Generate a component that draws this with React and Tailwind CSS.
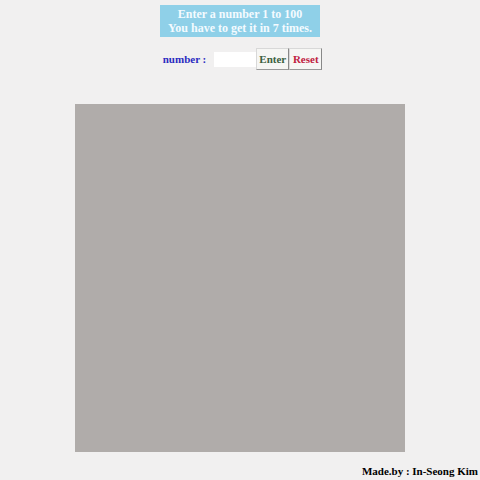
export default function App() {
  return (
    <div className="w-full min-h-[480px] bg-[#f1f0f0] flex flex-col items-center font-['Liberation_Serif',serif]">
      {/* Title */}
      <div className="mt-[5px] w-[160px] h-[32px] bg-[#8fd0e8] text-[#f4fbff] text-center font-bold text-[12px] leading-[14px] pt-[2px]">
        <p>Enter a number 1 to 100</p>
        <p>You have to get it in 7 times.</p>
      </div>

      {/* Input row */}
      <div className="mt-[11px] flex items-center h-[22px] pl-[5px]">
        <span className="text-[11px] font-bold text-[#2b2bc0] mr-[8px]">number :</span>
        <input type="text" className="w-[42px] h-[15px] bg-white outline-none border-0" />
        <button className="w-[33px] h-[22px] bg-[#f6f6f4] border border-[#d8d8d8] border-r-[#888] border-b-[#999] text-[11px] font-bold text-[#3a6040]">
          Enter
        </button>
        <button className="w-[33px] h-[22px] bg-[#f6f6f4] border border-[#d8d8d8] border-r-[#888] border-b-[#999] text-[11px] font-bold text-[#c02040]">
          Reset
        </button>
      </div>

      {/* Board */}
      <div className="mt-[34px] w-[330px] h-[348px] bg-[#b0acaa]" />

      {/* Footer */}
      <p className="self-end mt-[13px] mr-[2px] text-[11px] leading-[13px] font-bold text-black">
        Made.by : In-Seong Kim
      </p>
    </div>
  );
}
